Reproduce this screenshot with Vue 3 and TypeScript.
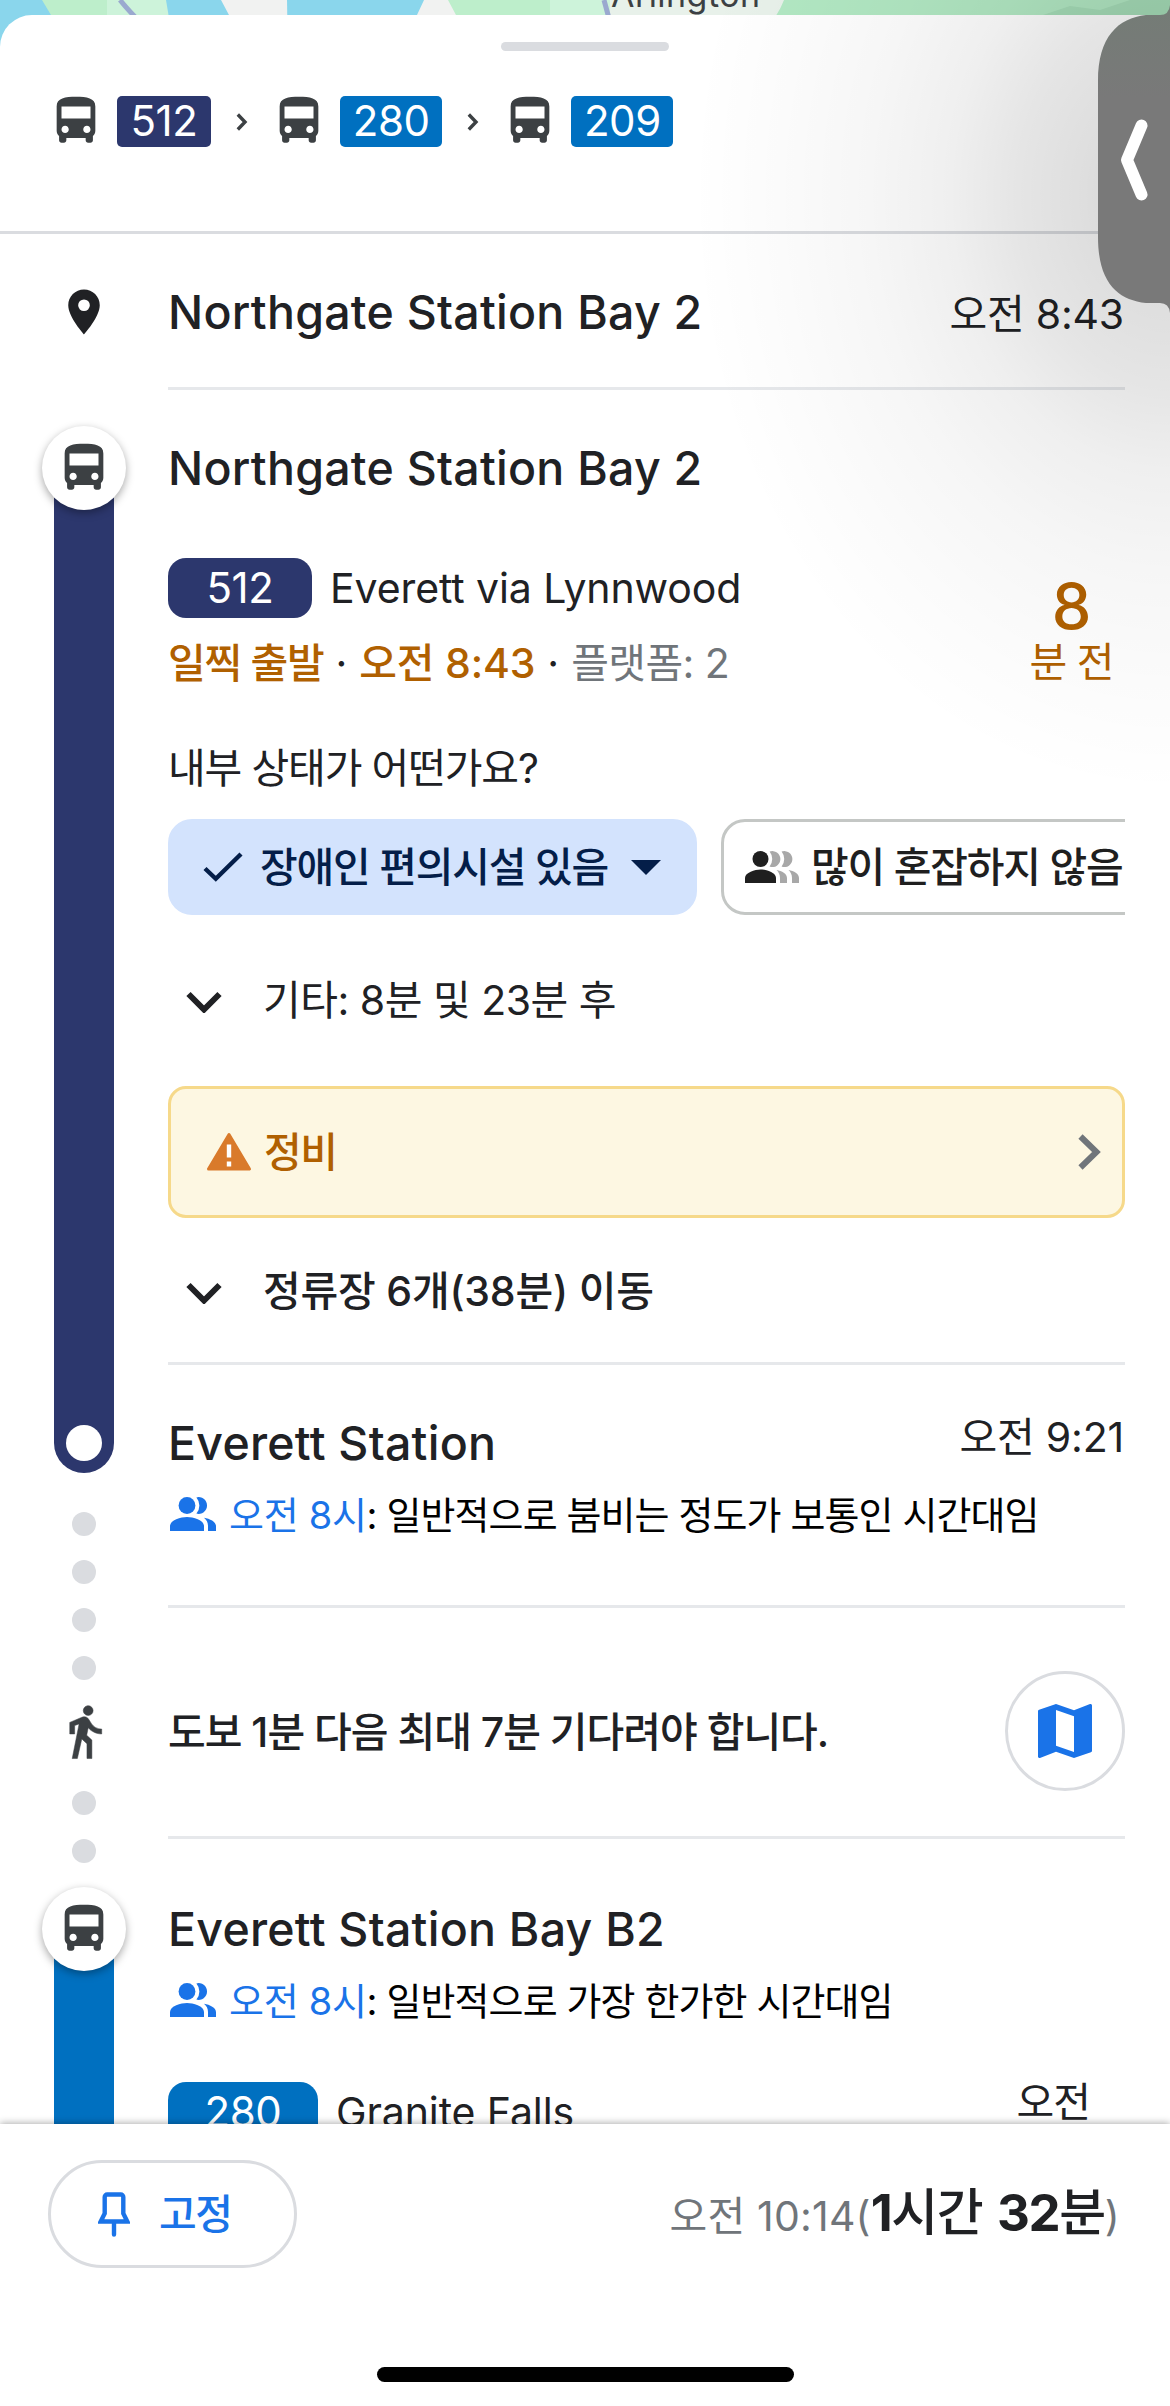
<script setup lang="ts">
interface Leg {
  line: string
  tone: 'navy' | 'blue'
}

const legs: Leg[] = [
  { line: '512', tone: 'navy' },
  { line: '280', tone: 'blue' },
  { line: '209', tone: 'blue' },
]
</script>

<template>
  <div class="screen">
    <svg class="defs" width="0" height="0" aria-hidden="true">
      <symbol id="bus" viewBox="0 0 24 24">
        <path
          fill="#3c4043"
          d="M4 16c0 .88.39 1.67 1 2.22V20c0 .55.45 1 1 1h1c.55 0 1-.45 1-1v-1h8v1c0 .55.45 1 1 1h1c.55 0 1-.45 1-1v-1.78c.61-.55 1-1.34 1-2.22V6c0-3.5-3.58-4-8-4s-8 .5-8 4v10zm3.5 1c-.83 0-1.5-.67-1.5-1.5S6.67 14 7.5 14s1.5.67 1.5 1.5S8.33 17 7.5 17zm9 0c-.83 0-1.5-.67-1.5-1.5s.67-1.5 1.5-1.5 1.5.67 1.5 1.5-.67 1.5-1.5 1.5zm1.5-6H6V6h12v5z"
        />
      </symbol>
      <symbol id="people" viewBox="0 0 46 34">
        <g fill="#1a73e8">
          <circle cx="17" cy="8.5" r="8.4" />
          <path d="M0 34v-5c0-6 11-9 17-9s17 3 17 9v5z" />
          <path d="M26.4.4a8.4 8.4 0 1 1 0 16.2 12.5 12.5 0 0 0 0-16.2z" />
          <path d="M34 20.8c6 1 12 4 12 8.4V34h-8v-5c0-3.5-1.5-6-4-8.2z" />
        </g>
      </symbol>
      <symbol id="expand" viewBox="0 0 36 22">
        <path d="M2.5 3 18 18.500 33.500 3" fill="none" stroke="#202124" stroke-width="6" />
      </symbol>
    </svg>

    <div class="map">
      <svg width="1170" height="60" viewBox="0 0 1170 60">
        <rect width="1170" height="60" fill="#8ad6ec" />
        <path d="M42 0h66v60H78z" fill="#bdeecb" />
        <path d="M107 0h59l10 60h-69z" fill="#cdf3da" />
        <path d="M221 0h66l1 60h-35z" fill="#f1f2f1" />
        <path d="M424 0h100v60H396z" fill="#f1f2f1" />
        <path d="M448 0h130v60h-98z" fill="#bdeecb" />
        <path d="M550 0h72v60h-72z" fill="#cdf3da" />
        <path d="M610 0h180l-30 60H610z" fill="#e8f1ea" />
        <path d="M784 0h386v60H740q36-38 44-60z" fill="#b2e8c3" />
        <path d="M1040 16 1070 6l30 4 30-10h40v60h-130z" fill="#a6ddb8" />
        <path d="M120 0q8 10 20 22M604 0l6 22" fill="none" stroke="#9aa9cf" stroke-width="5" />
      </svg>
      <span class="town">Arlington</span>
    </div>

    <main class="sheet">
      <header class="summary">
        <div class="handle"></div>
        <div class="legs">
          <template v-for="(leg, i) in legs" :key="leg.line">
            <svg v-if="i > 0" class="sep" width="12" height="18" viewBox="0 0 12 18">
              <path d="M1.800 1.500 9 9l-7.200 7.500" fill="none" stroke="#3c4043" stroke-width="3.400" />
            </svg>
            <svg class="bus" width="58" height="58"><use href="#bus" /></svg>
            <span class="tag" :class="leg.tone">{{ leg.line }}</span>
          </template>
        </div>
      </header>

      <div class="trip">
        <div class="rail">
          <svg class="place" width="54" height="54" viewBox="0 0 24 24">
            <path
              fill="#202124"
              d="M12 2C8.130 2 5 5.130 5 9c0 5.250 7 13 7 13s7-7.750 7-13c0-3.870-3.130-7-7-7zm0 9.600a2.600 2.600 0 1 1 0-5.200 2.600 2.600 0 0 1 0 5.200z"
            />
          </svg>
          <div class="ride first">
            <span class="node"><svg width="58" height="58"><use href="#bus" /></svg></span>
            <span class="bar navy"><i class="stop"></i></span>
          </div>
          <div class="dots upper"><i v-for="n in 4" :key="n"></i></div>
          <svg class="walk" width="59" height="59" viewBox="0 0 24 24">
            <path
              fill="#3c4043"
              d="M13.500 5.500c1.100 0 2-.9 2-2s-.9-2-2-2-2 .9-2 2 .9 2 2 2zM9.800 8.900 7 23h2.100l1.800-8 2.100 2v6h2v-7.500l-2.100-2 .6-3C14.800 12 16.800 13 19 13v-2c-1.900 0-3.500-1-4.300-2.400l-1-1.600c-.4-.6-1-1-1.700-1-.3 0-.5.100-.8.100L6 8.300V13h2V9.600l1.800-.7"
              stroke="#3c4043"
              stroke-width="0.200"
            />
          </svg>
          <div class="dots lower"><i v-for="n in 2" :key="n"></i></div>
          <div class="ride second">
            <span class="node"><svg width="58" height="58"><use href="#bus" /></svg></span>
            <span class="bar blue"></span>
          </div>
        </div>

        <div class="details">
          <section class="origin">
            <h2>Northgate Station Bay 2</h2>
            <time class="clock">오전 8:43</time>
          </section>

          <section class="board">
            <h2>Northgate Station Bay 2</h2>
            <div class="service">
              <div class="info">
                <div class="route">
                  <span class="line navy">512</span>
                  <span class="dest">Everett via Lynnwood</span>
                </div>
                <p class="status">
                  <b class="early">일찍 출발</b><i>·</i><b class="when">오전 8:43</b><i>·</i><span class="platform">플랫폼: 2</span>
                </p>
              </div>
              <div class="eta">
                <strong>8</strong>
                <span>분 전</span>
              </div>
            </div>
            <p class="question">내부 상태가 어떤가요?</p>
            <div class="chips">
              <button class="chip on">
                <svg class="check" width="40" height="30" viewBox="0 0 40 30">
                  <path d="M2 16.500 12.800 26.800 38 2" fill="none" stroke="#041e49" stroke-width="4.400" />
                </svg>
                <span>장애인 편의시설 있음</span>
                <svg class="caret" width="30" height="15" viewBox="0 0 30 15">
                  <path d="M0 0h30L15 15z" fill="#041e49" />
                </svg>
              </button>
              <button class="chip">
                <svg class="crowd" width="54" height="32" viewBox="0 0 54 32">
                  <g fill="#a8a8a8">
                    <path d="M24.600.6a8 8 0 1 1 0 15 12 12 0 0 0 0-15z" />
                    <path d="M36.600.6a8 8 0 1 1 0 15 12 12 0 0 0 0-15z" />
                    <path d="M31.500 19c5.500 1 10.500 3.500 10.500 8v5h-7v-5c0-3.500-1.500-6-3.500-8z" />
                    <path d="M43.500 19c5.500 1 10.500 3.500 10.500 8v5h-7v-5c0-3.500-1.500-6-3.500-8z" />
                  </g>
                  <circle cx="15.500" cy="8" r="8" fill="#1f1f1f" />
                  <path d="M0 32v-5c0-5.500 10-8.500 15.500-8.500S31 21.500 31 27v5z" fill="#1f1f1f" />
                </svg>
                <span>많이 혼잡하지 않음</span>
              </button>
            </div>
            <div class="more others">
              <svg width="36" height="22"><use href="#expand" /></svg>
              <span>기타: 8분 및 23분 후</span>
            </div>
            <div class="alert">
              <svg class="warn" width="46" height="40" viewBox="0 0 46 40">
                <path d="M23 2.500 43.500 37h-41z" fill="#d97a2b" stroke="#d97a2b" stroke-width="3" stroke-linejoin="round" />
                <path d="M23 12.500v13M23 29.500v5" stroke="#fff" stroke-width="4.400" />
              </svg>
              <span>정비</span>
              <svg class="go" width="24" height="36" viewBox="0 0 24 36">
                <path d="M2.500 2.500 18.500 18l-16 15.500" fill="none" stroke="#70757a" stroke-width="6" />
              </svg>
            </div>
            <div class="more stops">
              <svg width="36" height="22"><use href="#expand" /></svg>
              <span>정류장 6개(38분) 이동</span>
            </div>
          </section>

          <section class="alight">
            <div class="head">
              <h2>Everett Station</h2>
              <time class="clock">오전 9:21</time>
            </div>
            <p class="busy">
              <svg width="46" height="34"><use href="#people" /></svg>
              <span><em>오전 8시</em>: 일반적으로 붐비는 정도가 보통인 시간대임</span>
            </p>
          </section>

          <section class="transfer">
            <p>도보 1분 다음 최대 7분 기다려야 합니다.</p>
            <button class="round">
              <svg width="72" height="72" viewBox="0 0 24 24">
                <path
                  fill="#1a73e8"
                  d="M20.500 3l-.16.030L15 5.100 9 3 3.360 4.900c-.21.070-.36.250-.36.480V20.500c0 .28.220.5.500.5l.16-.03L9 18.900l6 2.100 5.640-1.900c.21-.07.36-.25.36-.48V3.500c0-.28-.22-.5-.5-.5zM15 19l-6-2.110V5l6 2.110V19z"
                />
              </svg>
            </button>
          </section>

          <section class="next">
            <h2>Everett Station Bay B2</h2>
            <p class="busy">
              <svg width="46" height="34"><use href="#people" /></svg>
              <span><em>오전 8시</em>: 일반적으로 가장 한가한 시간대임</span>
            </p>
            <div class="service">
              <div class="route">
                <span class="line blue">280</span>
                <span class="dest">Granite Falls</span>
              </div>
              <span class="depart">오전</span>
            </div>
          </section>
        </div>
      </div>
    </main>

    <footer class="bottom">
      <div class="actions">
        <button class="pin">
          <svg width="32" height="45" viewBox="0 0 32 45">
            <path
              d="M6.700 5a2.500 2.500 0 0 1 2.500-2.500h13.600A2.500 2.500 0 0 1 25.300 5v16.500l4 8H2.700l4-8zM16 30v12.500"
              fill="none"
              stroke="#1a73e8"
              stroke-width="4.400"
              stroke-linecap="round"
            />
          </svg>
          <span>고정</span>
        </button>
        <p class="total">오전 10:14(<b>1<span>시간</span> 32<span>분</span></b>)</p>
      </div>
      <div class="home"></div>
    </footer>

    <div class="shade"></div>
    <div class="edge">
      <svg width="72" height="288" viewBox="0 0 72 288">
        <defs>
          <linearGradient id="tint" x1="0" y1="0" x2="0" y2="1">
            <stop offset="0" stop-color="#747c76" />
            <stop offset="0.3" stop-color="#797979" />
          </linearGradient>
        </defs>
        <path
          d="M72-10v308q-1-10-10-10H48C20 285 0 268 0 222V66C0 22 20 3 48 0h14q9 0 10-10z"
          fill="url(#tint)"
        />
        <path d="M43.500 110.500 29 145l14.500 34.500" fill="none" stroke="#fff" stroke-width="12" stroke-linecap="round" stroke-linejoin="round" />
      </svg>
    </div>
  </div>
</template>

<style>
body {
  margin: 0;
  background: #fff;
}
</style>

<style scoped>
.screen {
  position: relative;
  display: flex;
  flex-direction: column;
  width: 1170px;
  height: 2406px;
  overflow: hidden;
  background: #fff;
  color: #202124;
  font-family: Inter, 'Noto Sans CJK KR', sans-serif;
  font-size: 41px;
  line-height: 60px;
  white-space: nowrap;
}

h2,
p {
  margin: 0;
  font-weight: 400;
}

button {
  box-sizing: border-box;
  padding: 0;
  border: 0;
  background: #fff;
  color: inherit;
  font: inherit;
}

i,
em {
  font-style: normal;
}

svg {
  display: block;
  flex: none;
}

.defs {
  position: absolute;
}

.navy {
  background: #2c376d;
}

.blue {
  background: #0070c0;
}

.map {
  flex: none;
  height: 60px;
  margin-bottom: -45px;
}

.town {
  position: absolute;
  top: -25px;
  left: 611px;
  color: #3c4043;
  font-size: 34px;
  line-height: 40px;
  letter-spacing: 0.45px;
}

.sheet {
  position: relative;
  display: flex;
  flex-direction: column;
  height: 2109px;
  overflow: hidden;
  border-radius: 32px 0 0 0;
  background: #fff;
}

.summary {
  box-sizing: border-box;
  flex: none;
  height: 219px;
  padding-top: 27px;
  border-bottom: 3px solid #dadce0;
}

.handle {
  width: 168px;
  height: 9px;
  margin: 0 auto;
  border-radius: 5px;
  background: #dadce0;
}

.legs {
  display: flex;
  align-items: center;
  height: 51px;
  margin: 45px 0 0 47px;
}

.legs .bus {
  margin: -1px 12px 0 0;
}

.legs .sep {
  margin: 0 22.500px 0 24.700px;
}

.tag {
  width: 102px;
  height: 51px;
  border-radius: 5px;
  color: #fff;
  font-size: 42px;
  line-height: 50px;
  letter-spacing: -0.4px;
  text-align: center;
}

.tag.navy {
  width: 94px;
}

.trip {
  display: flex;
}

.rail {
  display: flex;
  flex: none;
  flex-direction: column;
  align-items: center;
  width: 168px;
}

.place {
  margin-top: 51px;
}

.ride {
  display: flex;
  flex-direction: column;
  align-items: center;
}

.ride.first {
  height: 1047px;
  margin-top: 87px;
}

.ride.second {
  height: 300px;
  margin-top: 24px;
}

.node {
  z-index: 1;
  display: flex;
  flex: none;
  align-items: center;
  justify-content: center;
  width: 84px;
  height: 84px;
  border-radius: 50%;
  background: #fff;
  box-shadow: 0 3px 9px rgba(0, 0, 0, 0.35);
}

.bar {
  box-sizing: border-box;
  display: flex;
  flex: 1;
  align-items: flex-end;
  width: 60px;
  margin-top: -42px;
  padding: 12px;
  border-radius: 0 0 30px 30px;
}

.stop {
  width: 36px;
  height: 36px;
  border-radius: 50%;
  background: #fff;
}

.dots {
  display: flex;
  flex-direction: column;
  gap: 24px;
}

.dots i {
  width: 24px;
  height: 24px;
  border-radius: 50%;
  background: #dadce0;
}

.dots.upper {
  margin-top: 39px;
}

.walk {
  margin: 22px 0 0;
}

.dots.lower {
  margin-top: 30px;
}

.details {
  width: 957px;
}

h2 {
  font-size: 46.5px;
  font-weight: 500;
  line-height: 60px;
  letter-spacing: 0.25px;
}

section {
  box-sizing: border-box;
  border-bottom: 3px solid #e6e8eb;
}

.origin {
  display: flex;
  align-items: baseline;
  justify-content: space-between;
  height: 156px;
  padding-top: 48px;
}

.clock {
  margin-right: 1px;
  letter-spacing: -0.2px;
}

.board {
  height: 975px;
  padding-top: 48px;
}

.service {
  display: flex;
  justify-content: space-between;
  margin-top: 60px;
}

.route {
  display: flex;
  align-items: center;
  height: 60px;
}

.line {
  width: 144px;
  height: 60px;
  border-radius: 18px;
  color: #fff;
  font-size: 42px;
  letter-spacing: -0.4px;
  text-align: center;
}

.line.blue {
  width: 150px;
}

.dest {
  margin-left: 18px;
  line-height: 62px;
  letter-spacing: -0.1px;
}

.status {
  display: flex;
  margin-top: 15px;
}

.status i {
  width: 36px;
  text-align: center;
}

.status b {
  color: #b06000;
  font-weight: 500;
}

.status .early {
  letter-spacing: -1.3px;
}

.status .when {
  letter-spacing: -0.2px;
}

.platform {
  color: #70757a;
  letter-spacing: -0.6px;
}

.eta {
  display: flex;
  flex-direction: column;
  align-items: center;
  width: 107px;
  padding-top: 13px;
  color: #b06000;
}

.eta strong {
  font-size: 63px;
  font-weight: 450;
  line-height: 70px;
}

.eta span {
  line-height: 42px;
  letter-spacing: -1px;
}

.question {
  margin-top: 45px;
  letter-spacing: -1.15px;
}

.chips {
  display: flex;
  gap: 24px;
  margin-top: 21px;
  overflow: hidden;
}

.chip {
  display: flex;
  flex: none;
  align-items: center;
  width: 529px;
  height: 96px;
  padding-left: 21px;
  border: 3px solid #c4c7c5;
  border-radius: 24px;
  color: #1f1f1f;
  font-weight: 450;
  letter-spacing: -1.2px;
}

.chip:last-child {
  width: 440px;
}

.chip.on {
  padding-left: 32px;
  border-color: #d3e3fd;
  background: #d3e3fd;
  color: #041e49;
}

.check {
  margin-right: 17px;
}

.caret {
  margin-left: 23px;
}

.crowd {
  margin-right: 12px;
}

.more {
  display: flex;
  align-items: center;
  padding-left: 18px;
}

.more svg {
  margin: 4px 41px 0 0;
}

.others {
  margin-top: 55px;
  letter-spacing: -0.5px;
}

.stops {
  margin-top: 43px;
  font-weight: 500;
  letter-spacing: -0.2px;
}

.alert {
  box-sizing: border-box;
  display: flex;
  align-items: center;
  height: 132px;
  margin-top: 56px;
  padding: 0 20px 0 35px;
  border: 3px solid #f6d98a;
  border-radius: 18px;
  background: #fdf7e2;
  color: #b06000;
  font-weight: 500;
  letter-spacing: -1.5px;
}

.warn {
  margin-right: 12px;
}

.go {
  margin-left: auto;
}

.alight {
  height: 243px;
  padding-top: 48px;
}

.head {
  display: flex;
  justify-content: space-between;
}

.head .clock {
  line-height: 49px;
}

.busy {
  display: flex;
  align-items: center;
  margin-top: 17px;
  padding-left: 2px;
  color: #000;
  font-size: 38px;
  line-height: 50px;
  letter-spacing: -0.9px;
}

.busy svg {
  margin: -2px 13px 0 0;
}

.busy em {
  color: #1a73e8;
  letter-spacing: -0.3px;
}

.transfer {
  display: flex;
  align-items: center;
  justify-content: space-between;
  height: 231px;
  padding: 63px 0 45px;
  letter-spacing: -1px;
}

.transfer p {
  padding-top: 1px;
  font-weight: 500;
}

.round {
  display: flex;
  align-items: center;
  justify-content: center;
  width: 120px;
  height: 120px;
  border: 3px solid #dadce0;
  border-radius: 50%;
}

.next {
  padding-top: 60px;
  border: 0;
}

.next .service {
  margin-top: 56px;
}

.depart {
  margin: -10px 35px 0 0;
  letter-spacing: -1px;
}

.bottom {
  position: relative;
  box-sizing: border-box;
  height: 282px;
  padding-top: 36px;
  background: #fff;
  box-shadow: 0 -1px 7px rgba(0, 0, 0, 0.32);
}

.actions {
  display: flex;
  align-items: center;
  justify-content: space-between;
  height: 108px;
  padding: 0 50px 0 48px;
}

.pin {
  display: flex;
  align-items: center;
  width: 249px;
  height: 108px;
  padding-left: 47px;
  border: 3px solid #dadce0;
  border-radius: 54px;
  color: #1a73e8;
  font-weight: 500;
  letter-spacing: -1.5px;
}

.pin svg {
  margin-right: 29px;
}

.total {
  margin-top: 1px;
  color: #70757a;
  letter-spacing: 0.2px;
}

.total b {
  color: #202124;
  font-size: 51px;
  font-weight: 700;
  letter-spacing: -1.4px;
  word-spacing: 4px;
}

.total b span {
  font-weight: 500;
}

.home {
  width: 417px;
  height: 15px;
  margin: 99px auto 0;
  border-radius: 8px;
  background: #000;
}

/* Soft shadow cast by the handle docked on the right edge */
.shade {
  position: absolute;
  top: 0;
  right: 0;
  width: 500px;
  height: 860px;
  background: radial-gradient(
    ellipse 480px 600px at 500px 195px,
    rgba(0, 0, 0, 0.19) 0%,
    rgba(0, 0, 0, 0.13) 18%,
    rgba(0, 0, 0, 0.1) 32%,
    rgba(0, 0, 0, 0.063) 46%,
    rgba(0, 0, 0, 0.034) 63%,
    rgba(0, 0, 0, 0.014) 82%,
    transparent 100%
  );
  pointer-events: none;
}

.edge {
  position: absolute;
  top: 15px;
  right: 0;
}

.edge svg {
  overflow: visible;
}
</style>
